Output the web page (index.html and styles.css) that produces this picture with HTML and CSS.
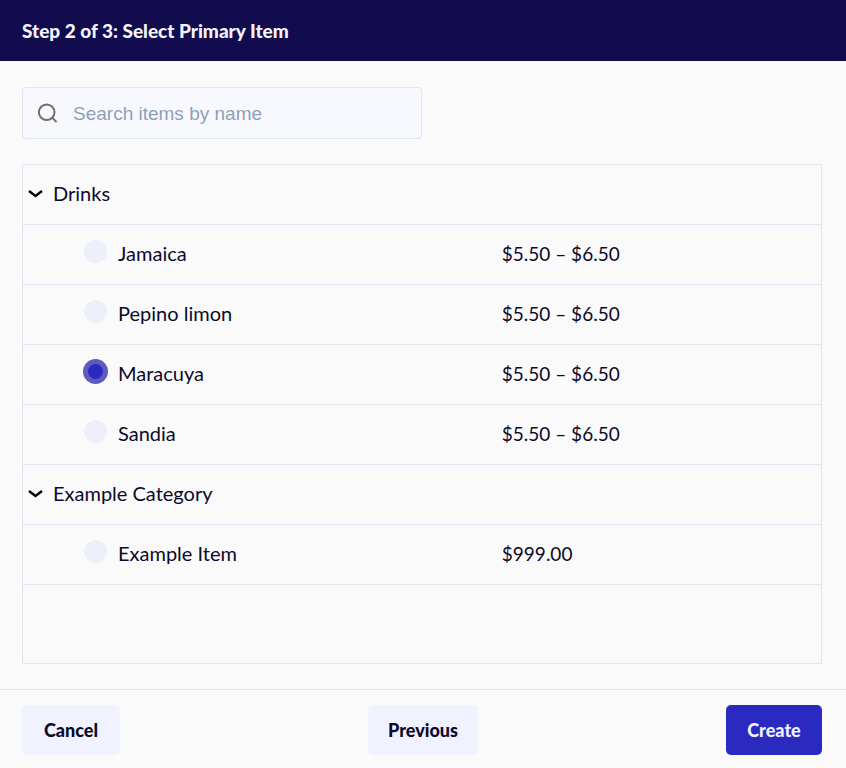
FILE: index.html
```html
<!DOCTYPE html>
<html lang="en">
<head>
  <meta charset="UTF-8">
  <meta name="viewport" content="width=device-width, initial-scale=1">
  <title>Select Primary Item</title>
  <link rel="stylesheet" href="styles.css">
</head>
<body>

  <header class="header">
    <h1 class="title">Step 2 of 3: Select Primary Item</h1>
  </header>

  <main class="content">
    <!-- Search -->
    <label class="search">
      <svg class="search-icon" viewBox="0 0 20 20" aria-hidden="true">
        <circle cx="8.7" cy="9.2" r="7.8"/>
        <path d="M14.3 14.8L18.6 19.1"/>
      </svg>
      <input class="search-input" type="text" placeholder="Search items by name" aria-label="Search items by name">
    </label>

    <!-- Items -->
    <div class="item-list">
      <table class="items">
        <colgroup>
          <col class="col-name">
          <col>
        </colgroup>
        <tbody>
          <tr>
            <th class="category" colspan="2">
              <button class="toggle" type="button">
                <svg class="chevron" viewBox="0 0 15 10" aria-hidden="true"><path d="M1 3L7.5 8L14 3"/></svg>
                Drinks
              </button>
            </th>
          </tr>
          <tr>
            <td class="item"><input class="radio" type="radio" name="item" id="jamaica"><label for="jamaica">Jamaica</label></td>
            <td class="price">$5.50 – $6.50</td>
          </tr>
          <tr>
            <td class="item"><input class="radio" type="radio" name="item" id="pepino"><label for="pepino">Pepino limon</label></td>
            <td class="price">$5.50 – $6.50</td>
          </tr>
          <tr>
            <td class="item"><input class="radio" type="radio" name="item" id="maracuya" checked><label for="maracuya">Maracuya</label></td>
            <td class="price">$5.50 – $6.50</td>
          </tr>
          <tr>
            <td class="item"><input class="radio" type="radio" name="item" id="sandia"><label for="sandia">Sandia</label></td>
            <td class="price">$5.50 – $6.50</td>
          </tr>
        </tbody>
        <tbody>
          <tr>
            <th class="category" colspan="2">
              <button class="toggle" type="button">
                <svg class="chevron" viewBox="0 0 15 10" aria-hidden="true"><path d="M1 3L7.5 8L14 3"/></svg>
                Example Category
              </button>
            </th>
          </tr>
          <tr>
            <td class="item"><input class="radio" type="radio" name="item" id="example"><label for="example">Example Item</label></td>
            <td class="price">$999.00</td>
          </tr>
        </tbody>
      </table>
    </div>
  </main>

  <footer class="footer">
    <button class="btn btn-cancel" type="button">Cancel</button>
    <button class="btn btn-previous" type="button">Previous</button>
    <button class="btn btn-create" type="button">Create</button>
  </footer>

</body>
</html>
```

FILE: styles.css
```css
* {
  box-sizing: border-box;
}

body {
  margin: 0;
  min-height: 100vh;
  display: flex;
  flex-direction: column;
  background-color: #fafafa;
  color: #0b0a2a;
  font-family: Lato, sans-serif;
  font-size: 20px;
  line-height: 24px;
}

.header {
  background-color: #120c4e;
  color: #f4f4ff;
  padding: 19px 22px 18px;
}

.title {
  margin: 0;
  font-size: 19px;
  font-weight: 900;
  line-height: 24px;
}

.content {
  flex: 1;
  display: flex;
  flex-direction: column;
  gap: 25px;
  padding: 26px 24px 25px 22px;
}

.search {
  display: flex;
  align-items: center;
  gap: 15px;
  width: 100%;
  max-width: 400px;
  height: 52px;
  padding: 0 15px;
  border: 1px solid #e2e6f2;
  border-radius: 4px;
  background-color: #f8f9fe;
}

.search-icon {
  flex: none;
  width: 20px;
  height: 20px;
  fill: none;
  stroke: #6f6f6f;
  stroke-width: 2;
}

.search-input {
  flex: 1;
  min-width: 0;
  padding: 2px 0 0;
  border: none;
  outline: none;
  background: none;
  color: #0b0a2a;
  font-family: "Liberation Sans", Arial, sans-serif;
  font-size: 19px;
}

.search-input::placeholder {
  color: #8f9fb9;
}

.item-list {
  flex: 1;
  border: 1px solid #e2e6f2;
}

.items {
  width: 100%;
  table-layout: fixed;
  border-collapse: separate;
  border-spacing: 0;
}

.col-name {
  width: 60%;
}

.items th,
.items td {
  height: 60px;
  padding: 0 0 3px;
  border-bottom: 1px solid #e2e6f2;
  font-weight: normal;
  text-align: left;
}

.toggle {
  display: flex;
  align-items: center;
  gap: 10px;
  padding: 0 5px;
  border: none;
  background: none;
  color: inherit;
  font: inherit;
  cursor: pointer;
}

.chevron {
  width: 15px;
  height: 10px;
  fill: none;
  stroke: #000;
  stroke-width: 2.4;
}

.items .item {
  padding: 0 0 5px 61px;
}

.items .price {
  padding-bottom: 1px;
  font-size: 19px;
}

.radio {
  appearance: none;
  width: 23px;
  height: 23px;
  margin: 0 11px 0 0;
  border-radius: 50%;
  background-color: #edf0f8;
  vertical-align: -2px;
  cursor: pointer;
}

.radio:checked {
  border: 4px solid #5f5bbd;
  background-color: #2b2ac0;
  box-shadow: 0 0 0 1px #5f5bbd;
}

.footer {
  display: flex;
  justify-content: space-between;
  padding: 15px 24px 13px 22px;
  border-top: 1px solid #e4e6ea;
}

.btn {
  height: 50px;
  padding: 0;
  border: none;
  border-radius: 5px;
  background-color: #f0f2ff;
  color: #0b0a2a;
  font-family: inherit;
  font-size: 18px;
  font-weight: 900;
  cursor: pointer;
}

.btn-cancel {
  width: 98px;
}

.btn-previous {
  width: 110px;
}

.btn-create {
  width: 96px;
  background-color: #2b2ac0;
  color: #f0f2ff;
}
```
